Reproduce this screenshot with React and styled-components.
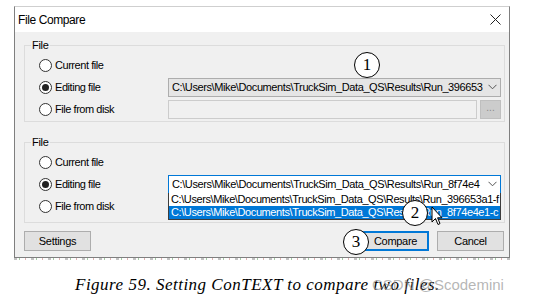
import React from 'react';
import styled, { createGlobalStyle } from 'styled-components';

const Global = createGlobalStyle`
  html, body { margin: 0; padding: 0; background: #fff; }
  body { width: 533px; height: 303px; overflow: hidden; font-family: "Liberation Sans", Arial, sans-serif; }
  * { box-sizing: border-box; }
`;

const Page = styled.div`
  position: relative;
  width: 533px;
  height: 303px;
  padding: 6px 0 0 14px;
`;

const Window = styled.div`
  width: 496px;
  border: 1px solid #7f7f7f;
  border-top-color: #cfcfcf;
  background: #f0f0f0;
`;

const TitleBar = styled.div`
  height: 25px;
  background: #fff;
  display: flex;
  align-items: center;
  justify-content: space-between;
  padding: 0 8px 0 3px;
  font-size: 12px;
  letter-spacing: -0.4px;
  color: #000;
`;

const Body = styled.div`
  padding: 13px 4px 6px 9px;
`;

const Group = styled.div`
  position: relative;
  border: 1px solid #dcdcdc;
  margin-top: ${p => p.$mt || 0}px;
  padding: 8px 3px ${p => p.$pb || 0}px 14px;
  display: grid;
  grid-template-columns: 129px 333px;
  grid-auto-rows: 22px;
`;

const Legend = styled.span`
  position: absolute;
  top: -8px;
  left: 6px;
  padding: 0 1px;
  background: #f0f0f0;
  font-size: 11px;
  line-height: 14px;
  letter-spacing: -0.3px;
  color: #000;
`;

const RadioRow = styled.label`
  display: flex;
  align-items: center;
  gap: 3px;
  font-size: 11px;
  color: #000;
  letter-spacing: -0.45px;
`;

const RadioDot = styled.span`
  width: 13px;
  height: 13px;
  border-radius: 50%;
  border: 1px solid #333;
  background: #fff;
  display: flex;
  align-items: center;
  justify-content: center;
  &::after {
    content: '';
    width: 7px;
    height: 7px;
    border-radius: 50%;
    background: ${p => (p.$checked ? '#222' : 'transparent')};
  }
`;

const Cell = styled.div`
  display: flex;
  align-items: center;
  gap: 3px;
  position: relative;
`;

const Combo = styled.div`
  position: relative;
  width: 333px;
  height: 19px;
  border: 1px solid ${p => (p.$focused ? '#0078d7' : '#adadad')};
  background: ${p => (p.$focused ? '#fff' : '#e5e5e5')};
  display: flex;
  align-items: center;
  padding: 0 3px 0 3px;
  font-size: 11px;
  letter-spacing: -0.4px;
  color: #000;
  white-space: nowrap;
  overflow: visible;
`;

const ComboText = styled.span`
  flex: 1;
  overflow: hidden;
`;

const Chevron = styled.svg`
  flex: none;
  margin-left: 3px;
`;

const TextBox = styled.div`
  width: 309px;
  height: 19px;
  border: 1px solid #cccccc;
  background: #f0f0f0;
`;

const DotsButton = styled.div`
  width: 21px;
  height: 19px;
  border: 1px solid #bfbfbf;
  background: #cccccc;
  color: #8a8a8a;
  font-size: 10px;
  display: flex;
  align-items: center;
  justify-content: center;
  line-height: 1;
  padding-bottom: 2px;
`;

const DropList = styled.div`
  position: absolute;
  left: -1px;
  top: 100%;
  width: 333px;
  border: 1px solid #3c3c3c;
  border-top: none;
  background: #fff;
  z-index: 2;
`;

const DropItem = styled.div`
  height: 13px;
  line-height: 13px;
  font-size: 11px;
  letter-spacing: -0.4px;
  padding-left: 2px;
  white-space: nowrap;
  overflow: hidden;
  background: ${p => (p.$selected ? '#0078d7' : '#fff')};
  color: ${p => (p.$selected ? '#fff' : '#000')};
`;

const ButtonRow = styled.div`
  margin-top: 8px;
  display: flex;
  align-items: center;
  padding-right: 1px;
`;

const Button = styled.div`
  width: 67px;
  height: 20px;
  border: 1px solid ${p => (p.$default ? '#0078d7' : '#adadad')};
  box-shadow: ${p => (p.$default ? 'inset 0 0 0 1px #0078d7' : 'none')};
  background: #e1e1e1;
  font-size: 11px;
  letter-spacing: -0.3px;
  display: flex;
  align-items: center;
  justify-content: center;
  margin-left: ${p => p.$ml || 0}px;
  color: #000;
`;

const Spacer = styled.div`
  flex: 1;
`;

const EdgeNoise = styled.div`
  width: 496px;
  height: 2px;
  background: repeating-linear-gradient(90deg, #9a9a9a 0 3px, transparent 3px 5px, #6aa86a 5px 6px, transparent 6px 11px, #c98080 11px 12px, transparent 12px 17px);
  opacity: 0.6;
`;

const Caption = styled.div`
  margin: 15px 0 0 61px;
  font-family: "Liberation Serif", "Times New Roman", serif;
  font-style: italic;
  font-size: 17px;
  letter-spacing: 0.5px;
  color: #000;
  white-space: nowrap;
`;

const Watermark = styled.div`
  position: absolute;
  left: 372px;
  top: 276px;
  font-family: "Liberation Sans", Arial, sans-serif;
  font-size: 15px;
  color: rgba(150, 150, 150, 0.7);
  white-space: nowrap;
`;

const Callout = styled.div`
  position: absolute;
  left: ${p => p.$x - 13}px;
  top: ${p => p.$y - 13}px;
  width: 26px;
  height: 26px;
  border-radius: 50%;
  border: 1px solid #000;
  background: #fff;
  font-family: "Liberation Serif", "Times New Roman", serif;
  font-size: 17px;
  display: flex;
  align-items: center;
  justify-content: center;
  color: #000;
  z-index: 5;
`;

const Cursor = styled.svg`
  position: absolute;
  left: 431px;
  top: 206px;
  z-index: 6;
`;

const ChevronIcon = () => (
  <Chevron width="9" height="6" viewBox="0 0 9 6">
    <path d="M0.5 0.8 L4.5 4.8 L8.5 0.8" fill="none" stroke="#555" strokeWidth="1" />
  </Chevron>
);

const Radio = ({ checked, children }) => (
  <RadioRow>
    <RadioDot $checked={checked} />
    {children}
  </RadioRow>
);

const Empty = styled.div``;

const base = 'C:\\Users\\Mike\\Documents\\TruckSim_Data_QS\\Results\\';

export default function App() {
  return (
    <Page>
      <Global />
      <Window>
        <TitleBar>
          <span>File Compare</span>
          <svg width="11" height="11" viewBox="0 0 11 11">
            <path d="M0.5 0.5 L10.5 10.5 M10.5 0.5 L0.5 10.5" stroke="#222" strokeWidth="1" />
          </svg>
        </TitleBar>
        <Body>
          <Group $pb={1}>
            <Legend>File</Legend>
            <Radio>Current file</Radio>
            <Empty />
            <Radio checked>Editing file</Radio>
            <Cell>
              <Combo>
                <ComboText>{base}Run_396653</ComboText>
                <ChevronIcon />
              </Combo>
            </Cell>
            <Radio>File from disk</Radio>
            <Cell>
              <TextBox />
              <DotsButton>...</DotsButton>
            </Cell>
          </Group>
          <Group $mt={20} $pb={5}>
            <Legend>File</Legend>
            <Radio>Current file</Radio>
            <Empty />
            <Radio checked>Editing file</Radio>
            <Cell>
              <Combo $focused>
                <ComboText>{base}Run_8f74e4</ComboText>
                <ChevronIcon />
                <DropList>
                  <DropItem>{base}Run_396653a1-f</DropItem>
                  <DropItem $selected>{base}Run_8f74e4e1-c</DropItem>
                </DropList>
              </Combo>
            </Cell>
            <Radio>File from disk</Radio>
            <Empty />
          </Group>
          <ButtonRow>
            <Button>Settings</Button>
            <Spacer />
            <Button $default>Compare</Button>
            <Button $ml={8}>Cancel</Button>
          </ButtonRow>
        </Body>
      </Window>
      <EdgeNoise />
      <Caption>Figure 59. Setting ConTEXT to compare two files.</Caption>
      <Watermark>CSDN @Scodemini</Watermark>
      <Callout $x={367} $y={65}>1</Callout>
      <Callout $x={415} $y={213}>2</Callout>
      <Callout $x={356} $y={242}>3</Callout>
      <Cursor width="13" height="21" viewBox="0 0 13 21">
        <path d="M1 1 L1 16 L4.5 12.5 L7 18.5 L9 17.6 L6.6 11.8 L11 11.8 Z" fill="#fff" stroke="#000" strokeWidth="1" strokeLinejoin="miter" />
      </Cursor>
    </Page>
  );
}
